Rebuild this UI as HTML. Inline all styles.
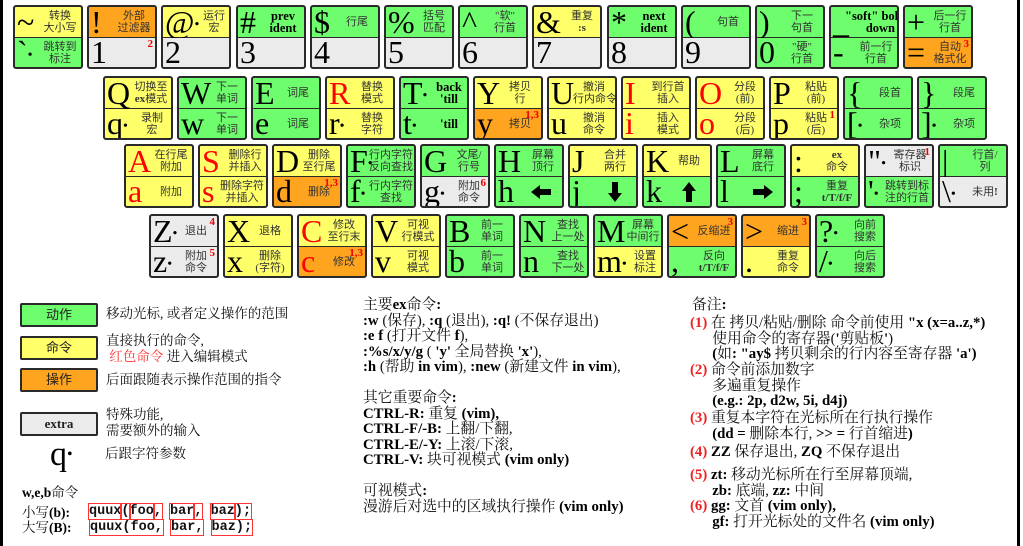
<!DOCTYPE html>
<html><head><meta charset="utf-8"><style>
*{margin:0;padding:0;box-sizing:border-box}
body{width:1023px;height:546px;background:#fff;position:relative;overflow:hidden;font-family:"Liberation Serif","Noto Serif CJK SC","Noto Sans CJK SC",serif;color:#222}
.bar{position:absolute;top:0;width:3px;height:546px;background:#000}
.k{position:absolute;width:70px;height:64px;border:2px solid #2a2a2a;border-radius:3px;overflow:hidden;background:#2a2a2a}
.h{position:absolute;left:0;width:66px;height:30px}
.t{top:0}.b{top:31px;height:29px}
.g{background:#6dfd6d}.y{background:#ffff6a}.o{background:#ffa41f}.x{background:#ebebeb}
.L{position:absolute;left:2px;top:0;font-size:32px;line-height:30px;white-space:nowrap;font-family:"Liberation Serif",serif;color:#000}
.b .L{line-height:29px}
.r{color:#f00}
.d{position:absolute;left:24px;right:0;top:50%;transform:translateY(-50%);text-align:center;font-size:11px;line-height:12px;white-space:nowrap;font-family:"Liberation Serif","Noto Sans CJK SC",sans-serif;color:#333}
.d svg{display:block;margin:0 auto}
.d.w{left:14px}
.bd{font-weight:bold;color:#000;font-family:"Liberation Serif",serif;font-size:12.5px}
.s{position:absolute;right:2px;top:0;color:#e00;font-weight:bold;font-size:11px;font-family:"Liberation Serif",serif}
.dot{font-size:14px;vertical-align:middle}
.lg{position:absolute;left:20px;width:78px;height:24px;border:2px solid #2a2a2a;border-radius:2px;text-align:center;font-size:13px;line-height:20px;font-family:"Liberation Serif","Noto Sans CJK SC",sans-serif}
.tx{position:absolute;font-size:13.5px;line-height:15.5px;font-family:"Liberation Serif","Noto Serif CJK SC",serif;color:#111;white-space:nowrap}
.big{font-size:14.8px}
.tx b{color:#000}
.rd{color:#e22;font-weight:bold}
.cd{font-family:"Liberation Mono",monospace;font-weight:bold;font-size:13.5px}
.cd span{outline:1px solid #f33}
</style></head><body>
<div class="bar" style="left:0"></div>
<div class="bar" style="left:1017px"></div>

<!-- Row 1 -->
<div class="k" style="left:13px;top:5px"><div class="h t y"><span class="L">~</span><span class="d">转换<br>大小写</span></div><div class="h b g"><span class="L">`<span class="dot">•</span></span><span class="d">跳转到<br>标注</span></div></div>
<div class="k" style="left:87px;top:5px"><div class="h t o"><span class="L">!</span><span class="d">外部<br>过滤器</span></div><div class="h b x"><span class="L">1</span><span class="s">2</span></div></div>
<div class="k" style="left:161px;top:5px"><div class="h t y"><span class="L">@<span class="dot">•</span></span><span class="d" style="left:36px">运行<br>宏</span></div><div class="h b x"><span class="L">2</span></div></div>
<div class="k" style="left:236px;top:5px"><div class="h t g"><span class="L">#</span><span class="d bd">prev<br>ident</span></div><div class="h b x"><span class="L">3</span></div></div>
<div class="k" style="left:310px;top:5px"><div class="h t g"><span class="L">$</span><span class="d">行尾</span></div><div class="h b x"><span class="L">4</span></div></div>
<div class="k" style="left:384px;top:5px"><div class="h t g"><span class="L">%</span><span class="d" style="left:30px">括号<br>匹配</span></div><div class="h b x"><span class="L">5</span></div></div>
<div class="k" style="left:458px;top:5px"><div class="h t g"><span class="L">^</span><span class="d">"软"<br>行首</span></div><div class="h b x"><span class="L">6</span></div></div>
<div class="k" style="left:532px;top:5px"><div class="h t y"><span class="L">&amp;</span><span class="d" style="left:30px">重复<br><b>:s</b></span></div><div class="h b x"><span class="L">7</span></div></div>
<div class="k" style="left:607px;top:5px"><div class="h t g"><span class="L">*</span><span class="d bd">next<br>ident</span></div><div class="h b x"><span class="L">8</span></div></div>
<div class="k" style="left:681px;top:5px"><div class="h t g"><span class="L">(</span><span class="d">句首</span></div><div class="h b x"><span class="L">9</span></div></div>
<div class="k" style="left:755px;top:5px"><div class="h t g"><span class="L">)</span><span class="d">下一<br>句首</span></div><div class="h b g"><span class="L">0</span><span class="d">"硬"<br>行首</span></div></div>
<div class="k" style="left:829px;top:5px"><div class="h t g"><span class="L">_</span><span class="d bd w" style="text-align:right;padding-right:2px">"soft" bol<br>down</span></div><div class="h b g"><span class="L">-</span><span class="d">前一行<br>行首</span></div></div>
<div class="k" style="left:903px;top:5px"><div class="h t g"><span class="L">+</span><span class="d">后一行<br>行首</span></div><div class="h b o"><span class="L">=</span><span class="d">自动<br>格式化</span><span class="s">3</span></div></div>

<!-- Row 2 -->
<div class="k" style="left:103px;top:76px"><div class="h t y"><span class="L">Q</span><span class="d" style="left:26px">切换至<br><b>ex</b>模式</span></div><div class="h b y"><span class="L">q<span class="dot">•</span></span><span class="d" style="left:28px">录制<br>宏</span></div></div>
<div class="k" style="left:177px;top:76px"><div class="h t g"><span class="L">W</span><span class="d" style="left:30px">下一<br>单词</span></div><div class="h b g"><span class="L">w</span><span class="d" style="left:30px">下一<br>单词</span></div></div>
<div class="k" style="left:251px;top:76px"><div class="h t g"><span class="L">E</span><span class="d">词尾</span></div><div class="h b g"><span class="L">e</span><span class="d">词尾</span></div></div>
<div class="k" style="left:325px;top:76px"><div class="h t y"><span class="L r">R</span><span class="d">替换<br>模式</span></div><div class="h b y"><span class="L">r<span class="dot">•</span></span><span class="d">替换<br>字符</span></div></div>
<div class="k" style="left:399px;top:76px"><div class="h t g"><span class="L">T<span class="dot">•</span></span><span class="d bd" style="left:30px">back<br>'till</span></div><div class="h b g"><span class="L">t<span class="dot">•</span></span><span class="d bd" style="left:30px">'till</span></div></div>
<div class="k" style="left:473px;top:76px"><div class="h t y"><span class="L">Y</span><span class="d">拷贝<br>行</span></div><div class="h b o"><span class="L">y</span><span class="d">拷贝</span><span class="s">1,3</span></div></div>
<div class="k" style="left:547px;top:76px"><div class="h t y"><span class="L">U</span><span class="d">撤消<br>行内命令</span></div><div class="h b y"><span class="L">u</span><span class="d">撤消<br>命令</span></div></div>
<div class="k" style="left:621px;top:76px"><div class="h t y"><span class="L r">I</span><span class="d">到行首<br>插入</span></div><div class="h b y"><span class="L r">i</span><span class="d">插入<br>模式</span></div></div>
<div class="k" style="left:695px;top:76px"><div class="h t y"><span class="L r">O</span><span class="d" style="left:30px">分段<br>(前)</span></div><div class="h b y"><span class="L r">o</span><span class="d" style="left:30px">分段<br>(后)</span></div></div>
<div class="k" style="left:769px;top:76px"><div class="h t y"><span class="L">P</span><span class="d">粘贴<br>(前)</span></div><div class="h b y"><span class="L">p</span><span class="d">粘贴<br>(后)</span><span class="s">1</span></div></div>
<div class="k" style="left:843px;top:76px"><div class="h t g"><span class="L">{</span><span class="d">段首</span></div><div class="h b g"><span class="L">[<span class="dot">•</span></span><span class="d">杂项</span></div></div>
<div class="k" style="left:917px;top:76px"><div class="h t g"><span class="L">}</span><span class="d">段尾</span></div><div class="h b g"><span class="L">]<span class="dot">•</span></span><span class="d">杂项</span></div></div>

<!-- Row 3 -->
<div class="k" style="left:124px;top:144px"><div class="h t y"><span class="L r">A</span><span class="d">在行尾<br>附加</span></div><div class="h b y"><span class="L r">a</span><span class="d">附加</span></div></div>
<div class="k" style="left:198px;top:144px"><div class="h t y"><span class="L r">S</span><span class="d">删除行<br>并插入</span></div><div class="h b y"><span class="L r">s</span><span class="d" style="left:18px">删除字符<br>并插入</span></div></div>
<div class="k" style="left:272px;top:144px"><div class="h t y"><span class="L">D</span><span class="d">删除<br>至行尾</span></div><div class="h b o"><span class="L">d</span><span class="d">删除</span><span class="s">1,3</span></div></div>
<div class="k" style="left:346px;top:144px"><div class="h t g"><span class="L">F<span class="dot">•</span></span><span class="d" style="left:20px">行内字符<br>反向查找</span></div><div class="h b g"><span class="L">f<span class="dot">•</span></span><span class="d" style="left:20px">行内字符<br>查找</span></div></div>
<div class="k" style="left:420px;top:144px"><div class="h t g"><span class="L">G</span><span class="d" style="left:28px">文尾/<br>行号</span></div><div class="h b x"><span class="L">g<span class="dot">•</span></span><span class="d" style="left:28px">附加<br>命令</span><span class="s">6</span></div></div>
<div class="k" style="left:494px;top:144px"><div class="h t g"><span class="L">H</span><span class="d" style="left:28px">屏幕<br>顶行</span></div><div class="h b g"><span class="L">h</span><span class="d"><svg width="22" height="16" viewBox="0 0 22 16"><path d="M1 8 L10 1 L10 5 L21 5 L21 11 L10 11 L10 15 Z" fill="#000"/></svg></span></div></div>
<div class="k" style="left:568px;top:144px"><div class="h t y"><span class="L">J</span><span class="d">合并<br>两行</span></div><div class="h b g"><span class="L">j</span><span class="d"><svg width="16" height="22" viewBox="0 0 16 22"><path d="M8 21 L1 12 L5 12 L5 1 L11 1 L11 12 L15 12 Z" fill="#000"/></svg></span></div></div>
<div class="k" style="left:642px;top:144px"><div class="h t y"><span class="L">K</span><span class="d">帮助</span></div><div class="h b g"><span class="L">k</span><span class="d"><svg width="16" height="22" viewBox="0 0 16 22"><path d="M8 1 L1 10 L5 10 L5 21 L11 21 L11 10 L15 10 Z" fill="#000"/></svg></span></div></div>
<div class="k" style="left:716px;top:144px"><div class="h t g"><span class="L">L</span><span class="d">屏幕<br>底行</span></div><div class="h b g"><span class="L">l</span><span class="d"><svg width="22" height="16" viewBox="0 0 22 16"><path d="M21 8 L12 1 L12 5 L1 5 L1 11 L12 11 L12 15 Z" fill="#000"/></svg></span></div></div>
<div class="k" style="left:790px;top:144px"><div class="h t y"><span class="L">:</span><span class="d"><b>ex</b><br>命令</span></div><div class="h b g"><span class="L">;</span><span class="d">重复<br><b>t/T/f/F</b></span></div></div>
<div class="k" style="left:864px;top:144px"><div class="h t x"><span class="L">"<span class="dot">•</span></span><span class="d" style="left:22px">寄存器<br>标识</span><span class="s">1</span></div><div class="h b g"><span class="L">'<span class="dot">•</span></span><span class="d" style="left:16px">跳转到标<br>注的行首</span></div></div>
<div class="k" style="left:938px;top:144px"><div class="h t g"><span class="L">|</span><span class="d">行首/<br>列</span></div><div class="h b x"><span class="L">\<span class="dot">•</span></span><span class="d">未用<b>!</b></span></div></div>

<!-- Row 4 -->
<div class="k" style="left:149px;top:214px"><div class="h t x"><span class="L">Z<span class="dot">•</span></span><span class="d">退出</span><span class="s">4</span></div><div class="h b x"><span class="L">z<span class="dot">•</span></span><span class="d">附加<br>命令</span><span class="s">5</span></div></div>
<div class="k" style="left:223px;top:214px"><div class="h t y"><span class="L">X</span><span class="d">退格</span></div><div class="h b y"><span class="L">x</span><span class="d">删除<br>(字符)</span></div></div>
<div class="k" style="left:297px;top:214px"><div class="h t y"><span class="L r">C</span><span class="d">修改<br>至行末</span></div><div class="h b o"><span class="L r">c</span><span class="d">修改</span><span class="s">1,3</span></div></div>
<div class="k" style="left:371px;top:214px"><div class="h t y"><span class="L">V</span><span class="d">可视<br>行模式</span></div><div class="h b y"><span class="L">v</span><span class="d">可视<br>模式</span></div></div>
<div class="k" style="left:445px;top:214px"><div class="h t g"><span class="L">B</span><span class="d">前一<br>单词</span></div><div class="h b g"><span class="L">b</span><span class="d">前一<br>单词</span></div></div>
<div class="k" style="left:519px;top:214px"><div class="h t g"><span class="L">N</span><span class="d" style="left:28px">查找<br>上一处</span></div><div class="h b g"><span class="L">n</span><span class="d" style="left:28px">查找<br>下一处</span></div></div>
<div class="k" style="left:593px;top:214px"><div class="h t g"><span class="L">M</span><span class="d" style="left:30px">屏幕<br>中间行</span></div><div class="h b y"><span class="L">m<span class="dot">•</span></span><span class="d" style="left:34px">设置<br>标注</span></div></div>
<div class="k" style="left:667px;top:214px"><div class="h t o"><span class="L">&lt;</span><span class="d">反缩进</span><span class="s">3</span></div><div class="h b g"><span class="L">,</span><span class="d">反向<br><b>t/T/f/F</b></span></div></div>
<div class="k" style="left:741px;top:214px"><div class="h t o"><span class="L">&gt;</span><span class="d">缩进</span><span class="s">3</span></div><div class="h b y"><span class="L">.</span><span class="d">重复<br>命令</span></div></div>
<div class="k" style="left:815px;top:214px"><div class="h t g"><span class="L">?<span class="dot">•</span></span><span class="d" style="left:30px">向前<br>搜索</span></div><div class="h b g"><span class="L">/<span class="dot">•</span></span><span class="d" style="left:30px">向后<br>搜索</span></div></div>

<!-- Legend -->
<div class="lg g" style="top:303px">动作</div>
<div class="lg y" style="top:336px">命令</div>
<div class="lg o" style="top:368px">操作</div>
<div class="lg x" style="top:412px;font-weight:bold;font-family:'Liberation Serif',serif">extra</div>
<div class="tx" style="left:106px;top:306px">移动光标, 或者定义操作的范围</div>
<div class="tx" style="left:106px;top:333px">直接执行的命令,<br><span style="color:#f33">&nbsp;红色命令</span> 进入编辑模式</div>
<div class="tx" style="left:106px;top:372px">后面跟随表示操作范围的指令</div>
<div class="tx" style="left:106px;top:407px">特殊功能,<br>需要额外的输入</div>
<div class="tx" style="left:50px;top:438px;font-size:34px;line-height:34px;font-family:'Liberation Serif',serif;color:#000">q<span style="font-size:16px;vertical-align:top">•</span></div>
<div class="tx" style="left:105px;top:446px">后跟字符参数</div>
<div class="tx" style="left:22px;top:485px"><b>w,e,b</b>命令</div>
<div class="tx" style="left:22px;top:505px">小写<b>(b):</b></div>
<div class="tx" style="left:22px;top:520px">大写<b>(B):</b></div>
<div class="tx cd" style="left:89px;top:504px"><span>quux</span><span>(</span><span>foo</span><span>,</span> <span>bar</span><span>,</span> <span>baz</span><span>);</span></div>
<div class="tx cd" style="left:90px;top:520px"><span>quux(foo,</span> <span>bar,</span> <span>baz);</span></div>

<!-- Middle -->
<div class="tx big" style="left:363px;top:298px">主要<b>ex</b>命令<b>:</b><br><b>:w</b> (保存), <b>:q</b> (退出), <b>:q!</b> (不保存退出)<br><b>:e f</b> (打开文件 <b>f</b>),<br><b>:%s/x/y/g</b> ( <b>'y'</b> 全局替换 <b>'x'</b>),<br><b>:h</b> (帮助 <b>in vim</b>), <b>:new</b> (新建文件 <b>in vim</b>),<br><br>其它重要命令<b>:</b><br><b>CTRL-R:</b> 重复 <b>(vim),</b><br><b>CTRL-F/-B:</b> 上翻/下翻,<br><b>CTRL-E/-Y:</b> 上滚/下滚,<br><b>CTRL-V:</b> 块可视模式 <b>(vim only)</b><br><br>可视模式<b>:</b><br>漫游后对选中的区域执行操作 <b>(vim only)</b></div>

<!-- Right -->
<div class="tx big" style="left:692px;top:298px">备注<b>:</b></div>
<div class="tx big" style="left:690px;top:316px"><span class="rd">(1)</span> 在 拷贝/粘贴/删除 命令前使用 <b>"x (x=a..z,*)</b><br>&nbsp;&nbsp;&nbsp;&nbsp;&nbsp;&nbsp;使用命令的寄存器(<b>'</b>剪贴板<b>'</b>)<br>&nbsp;&nbsp;&nbsp;&nbsp;&nbsp;&nbsp;<b>(</b>如<b>: "ay$</b> 拷贝剩余的行内容至寄存器 <b>'a')</b></div>
<div class="tx big" style="left:690px;top:363px"><span class="rd">(2)</span> 命令前添加数字<br>&nbsp;&nbsp;&nbsp;&nbsp;&nbsp;&nbsp;多遍重复操作<br>&nbsp;&nbsp;&nbsp;&nbsp;&nbsp;&nbsp;<b>(e.g.: 2p, d2w, 5i, d4j)</b></div>
<div class="tx big" style="left:690px;top:411px"><span class="rd">(3)</span> 重复本字符在光标所在行执行操作<br>&nbsp;&nbsp;&nbsp;&nbsp;&nbsp;&nbsp;<b>(dd =</b> 删除本行, <b>&gt;&gt; =</b> 行首缩进<b>)</b></div>
<div class="tx big" style="left:690px;top:445px"><span class="rd">(4)</span> <b>ZZ</b> 保存退出, <b>ZQ</b> 不保存退出</div>
<div class="tx big" style="left:690px;top:468px"><span class="rd">(5)</span> <b>zt:</b> 移动光标所在行至屏幕顶端,<br>&nbsp;&nbsp;&nbsp;&nbsp;&nbsp;&nbsp;<b>zb:</b> 底端, <b>zz:</b> 中间</div>
<div class="tx big" style="left:690px;top:499px"><span class="rd">(6)</span> <b>gg:</b> 文首 <b>(vim only),</b><br>&nbsp;&nbsp;&nbsp;&nbsp;&nbsp;&nbsp;<b>gf:</b> 打开光标处的文件名 <b>(vim only)</b></div>
</body></html>
